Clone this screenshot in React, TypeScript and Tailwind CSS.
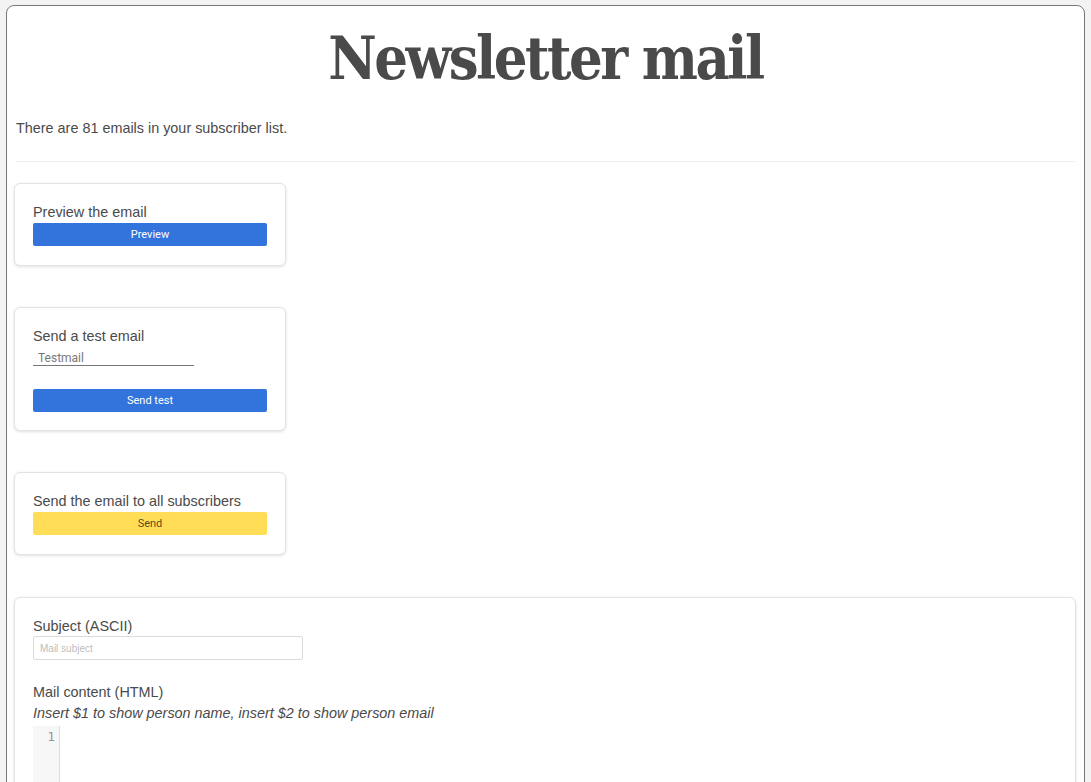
const Card = ({ children, className = "" }: { children: React.ReactNode; className?: string }) => (
  <div className={`rounded-md border border-[#e3e3e3] bg-white shadow-[0_1px_3px_rgba(0,0,0,0.12)] ${className}`}>
    {children}
  </div>
);

const Button = ({ label, yellow }: { label: string; yellow?: boolean }) => (
  <button
    className={`flex h-[23px] w-[234px] items-center justify-center rounded-[2px] pt-[2px] font-['Roboto'] text-[11px] ${
      yellow ? "bg-[#ffdd57] text-[rgba(0,0,0,0.7)]" : "bg-[#3273dc] text-white"
    }`}
  >
    {label}
  </button>
);

export default function App() {
  return (
    <div className="min-h-[782px] bg-[#f3f3f3] px-[6px] pt-[5px] font-['Liberation_Sans',Arial,sans-serif] text-[14.4px] text-[#4a4a4a]">
      <div className="min-h-[790px] rounded-t-lg border border-[#777] bg-white px-[9px]">
        <h1 className="pt-[13px] text-center font-['DejaVu_Serif',serif] text-[59px] leading-[80px] font-bold tracking-[-2.5px] text-[#4a4a4a] [font-stretch:condensed]">
          Newsletter mail
        </h1>
        <p className="mt-[18px] leading-[22px]">There are 81 emails in your subscriber list.</p>
        <hr className="mt-[22px] border-t border-[#efefef]" />

        <div className="mt-[21px] flex flex-col gap-[41px]">
          <Card className="-ml-[2px] w-[272px] px-[18px] pt-[18px] pb-[19px]">
            <div className="leading-[21px]">Preview the email</div>
            <Button label="Preview" />
          </Card>

          <Card className="-ml-[2px] w-[272px] px-[18px] pt-[18px] pb-[18px]">
            <div className="leading-[20px]">Send a test email</div>
            <div className="mt-[1px] w-[161px] border-b border-[#777] pt-[4px] pl-[5px] font-['Roboto'] text-[12px] leading-[14px] text-[#777]">
              Testmail
            </div>
            <div className="mt-[23px]">
              <Button label="Send test" />
            </div>
          </Card>

          <Card className="-ml-[2px] w-[272px] px-[18px] pt-[18px] pb-[19px]">
            <div className="leading-[21px]">Send the email to all subscribers</div>
            <Button label="Send" yellow />
          </Card>

          <Card className="-mr-[1px] -ml-[2px] mt-[1px] px-[18px] pt-[19px] pb-[40px]">
            <div className="leading-[19px]">Subject (ASCII)</div>
            <div className="flex h-[24px] w-[270px] items-center rounded-[2px] border border-[#dbdbdb] pl-[6px] text-[10px] text-[#bdbdbd]">
              Mail subject
            </div>
            <div className="mt-[22px] leading-[20px]">Mail content (HTML)</div>
            <div className="mt-[1px] leading-[20px] italic">
              Insert $1 to show person name, insert $2 to show person email
            </div>
            <div className="mt-[3px] flex h-[80px]">
              <div className="w-[27px] border-r border-[#ddd] bg-[#f7f7f7] pt-[2px] pr-[4px] text-right font-['DejaVu_Sans_Mono',monospace] text-[13px] leading-[18px] text-[#999]">
                1
              </div>
              <div className="flex-1" />
            </div>
          </Card>
        </div>
      </div>
    </div>
  );
}
